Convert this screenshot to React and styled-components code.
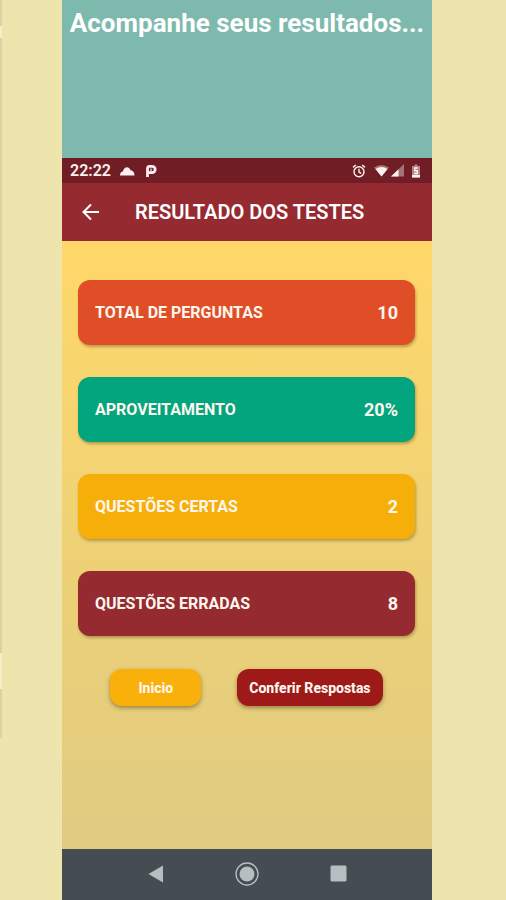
import React from "react";
import styled, { createGlobalStyle } from "styled-components";

const GlobalStyle = createGlobalStyle`
  *, *::before, *::after { box-sizing: border-box; }
  body {
    margin: 0;
    background: #eee5ae;
    font-family: Roboto, "Liberation Sans", sans-serif;
  }
`;

const Page = styled.div`
  display: grid;
  grid-template-columns: 62px minmax(0, 1fr) 74px;
  min-height: 100vh;
`;

const Edge = styled.div`
  display: flex;
  flex-direction: column;
  width: 2px;
`;

const EdgePiece = styled.div`
  height: ${(p) => p.$size}px;
  background: ${(p) => p.$color};
`;

const Column = styled.main`
  display: flex;
  flex-direction: column;
`;

const Banner = styled.header`
  height: 158px;
  padding-top: 7px;
  background: #7db9ad;
  color: #fff;
  text-align: center;
`;

const Headline = styled.h1`
  margin: 0;
  font-size: 26px;
  line-height: 32px;
  font-weight: 700;
  white-space: nowrap;
`;

const StatusBar = styled.div`
  display: flex;
  align-items: center;
  gap: 8px;
  height: 25px;
  padding: 0 12px 0 8px;
  background: #701d26;
  color: #fdf0ee;
  font-size: 16px;
  font-weight: 600;
`;

const StatusIcons = styled.div`
  display: flex;
  align-items: center;
  gap: ${(p) => p.$gap}px;
  margin-left: ${(p) => (p.$end ? "auto" : "0")};
`;

const AppBar = styled.div`
  display: flex;
  align-items: center;
  gap: 33px;
  height: 58px;
  padding: 0 18px;
  background: #962a31;
  color: #fff;
`;

const BackButton = styled.button`
  display: flex;
  padding: 0;
  border: 0;
  background: none;
  color: inherit;
`;

const Title = styled.h2`
  margin: 0;
  font-size: 20px;
  line-height: 24px;
  font-weight: 600;
`;

const Content = styled.section`
  flex: 1;
  padding: 39px 17px 32px 16px;
  background: linear-gradient(#ffd869, #dfcb82);
`;

const Results = styled.dl`
  display: flex;
  flex-direction: column;
  gap: 32px;
  margin: 0;
`;

const ResultCard = styled.div`
  display: flex;
  align-items: center;
  justify-content: space-between;
  height: 65px;
  padding: 0 17px;
  border-radius: 12px;
  background: ${(p) => p.$color};
  box-shadow: 1px 2px 3px rgba(90, 70, 20, 0.4);
  color: #fff6ee;
`;

const ResultLabel = styled.dt`
  font-size: 16px;
  line-height: 20px;
  font-weight: 700;
`;

const ResultValue = styled.dd`
  margin: 0;
  font-size: 18px;
  line-height: 20px;
  font-weight: 700;
`;

const Actions = styled.div`
  display: flex;
  justify-content: center;
  gap: 36px;
  margin-top: 33px;
`;

const ActionButton = styled.button`
  height: 37px;
  padding: 0 ${(p) => p.$pad}px;
  border: 0;
  border-radius: 12px;
  background: ${(p) => p.$color};
  box-shadow: 0 2px 4px rgba(80, 60, 20, 0.5);
  color: #fff6ee;
  font-family: inherit;
  font-size: 14px;
  line-height: 18px;
  font-weight: 800;
  white-space: nowrap;
`;

const NavBar = styled.nav`
  display: flex;
  align-items: center;
  justify-content: center;
  gap: 70px;
  height: 51px;
  padding-bottom: 2px;
  background: #454d53;
`;

const NavButton = styled.button`
  display: flex;
  padding: 0;
  border: 0;
  background: none;
  color: #b5bec1;
`;

const edgePieces = [
  { size: 26, color: "#ddd2a2" },
  { size: 12, color: "#f7ecc6" },
  { size: 615, color: "#ddd2a2" },
  { size: 36, color: "#f7ecc6" },
  { size: 49, color: "#ddd2a2" },
];

const results = [
  { label: "TOTAL DE PERGUNTAS", value: "10", color: "#df4e27" },
  { label: "APROVEITAMENTO", value: "20%", color: "#02a57e" },
  { label: "QUESTÕES CERTAS", value: "2", color: "#f6af09" },
  { label: "QUESTÕES ERRADAS", value: "8", color: "#962a31" },
];

const CloudIcon = () => (
  <svg width="16" height="10" viewBox="0 0 16 10" fill="currentColor" aria-hidden="true">
    <path d="M1 9.500C1 6.500 2.500 5.500 4 5.200 5 1 9.500-0.500 11.500 4 14 4.500 15.500 6.500 15.500 9.500Z" />
  </svg>
);

const ParkingIcon = () => (
  <svg width="12" height="14" viewBox="0 0 12 14" fill="none" stroke="currentColor" aria-hidden="true">
    <path d="M2.500 13V4.500Q2.500 2.300 4.700 2.300H7A3 3 0 0 1 7 8.700H2.500" strokeWidth="2.800" />
    <path d="M6 4.500V9" strokeWidth="1.200" />
  </svg>
);

const AlarmIcon = () => (
  <svg width="14" height="14" viewBox="0 0 14 14" fill="none" stroke="currentColor" aria-hidden="true">
    <circle cx="7" cy="7.700" r="5" strokeWidth="1.400" />
    <path d="M7 4.800V8L9.200 9.400M1 3.400 3.800 1M13 3.400 10.200 1" strokeWidth="1.400" />
  </svg>
);

const WifiIcon = () => (
  <svg width="15" height="13" viewBox="0 0 15 13" fill="currentColor" aria-hidden="true">
    <path d="M0 3.500Q7.500-1.500 15 3.500L7.500 12.500Z" opacity="0.4" />
    <path d="M1.500 5Q7.500 1 13.500 5L7.500 12.500Z" />
  </svg>
);

const SignalIcon = () => (
  <svg width="13" height="13" viewBox="0 0 13 13" fill="currentColor" aria-hidden="true">
    <path d="M0 12.500 13 0V12.500Z" opacity="0.4" />
    <path d="M0 12.500 7.500 5.300V12.500Z" />
  </svg>
);

const BatteryIcon = () => (
  <svg width="8" height="14" viewBox="0 0 8 14" fill="currentColor" aria-hidden="true">
    <path d="M2.500 0.500H5.500V2H8V13.500H0V2H2.500Z" opacity="0.5" />
    <path d="M0 11H8V13.500H0Z" />
    <path d="M5.800 4H2.800V6.700H5.300V9.500H2" fill="none" stroke="currentColor" strokeWidth="1.400" />
  </svg>
);

const ArrowIcon = () => (
  <svg width="22" height="22" viewBox="0 0 22 22" fill="none" stroke="currentColor" strokeWidth="2" aria-hidden="true">
    <path d="M19 11H4M11 3.500 3.500 11 11 18.500" />
  </svg>
);

const TriangleIcon = () => (
  <svg width="16" height="18" viewBox="0 0 16 18" fill="currentColor" aria-hidden="true">
    <path d="M0.500 9 15 0.500V17.500Z" />
  </svg>
);

const CircleIcon = () => (
  <svg width="26" height="26" viewBox="0 0 26 26" aria-hidden="true">
    <circle cx="13" cy="13" r="11" fill="none" stroke="currentColor" strokeWidth="1.300" />
    <circle cx="13" cy="13" r="7.500" fill="currentColor" />
  </svg>
);

const SquareIcon = () => (
  <svg width="17" height="17" viewBox="0 0 17 17" fill="currentColor" aria-hidden="true">
    <rect x="0.500" y="0.500" width="16" height="16" rx="1.500" />
  </svg>
);

export default function App() {
  return (
    <>
      <GlobalStyle />
      <Page>
        <Edge>
          {edgePieces.map((piece, i) => (
            <EdgePiece key={i} $size={piece.size} $color={piece.color} />
          ))}
        </Edge>
        <Column>
          <Banner>
            <Headline>Acompanhe seus resultados...</Headline>
          </Banner>
          <StatusBar>
            <span>22:22</span>
            <StatusIcons $gap={10}>
              <CloudIcon />
              <ParkingIcon />
            </StatusIcons>
            <StatusIcons $gap={8} $end>
              <AlarmIcon />
              <StatusIcons $gap={2}>
                <WifiIcon />
                <SignalIcon />
              </StatusIcons>
              <BatteryIcon />
            </StatusIcons>
          </StatusBar>
          <AppBar>
            <BackButton type="button" aria-label="Voltar">
              <ArrowIcon />
            </BackButton>
            <Title>RESULTADO DOS TESTES</Title>
          </AppBar>
          <Content>
            <Results>
              {results.map((item) => (
                <ResultCard key={item.label} $color={item.color}>
                  <ResultLabel>{item.label}</ResultLabel>
                  <ResultValue>{item.value}</ResultValue>
                </ResultCard>
              ))}
            </Results>
            <Actions>
              <ActionButton type="button" $color="#f9b00a" $pad={28}>Inicio</ActionButton>
              <ActionButton type="button" $color="#9e1a19" $pad={12}>Conferir Respostas</ActionButton>
            </Actions>
          </Content>
          <NavBar>
            <NavButton type="button" aria-label="Voltar"><TriangleIcon /></NavButton>
            <NavButton type="button" aria-label="Tela inicial"><CircleIcon /></NavButton>
            <NavButton type="button" aria-label="Recentes"><SquareIcon /></NavButton>
          </NavBar>
        </Column>
      </Page>
    </>
  );
}
